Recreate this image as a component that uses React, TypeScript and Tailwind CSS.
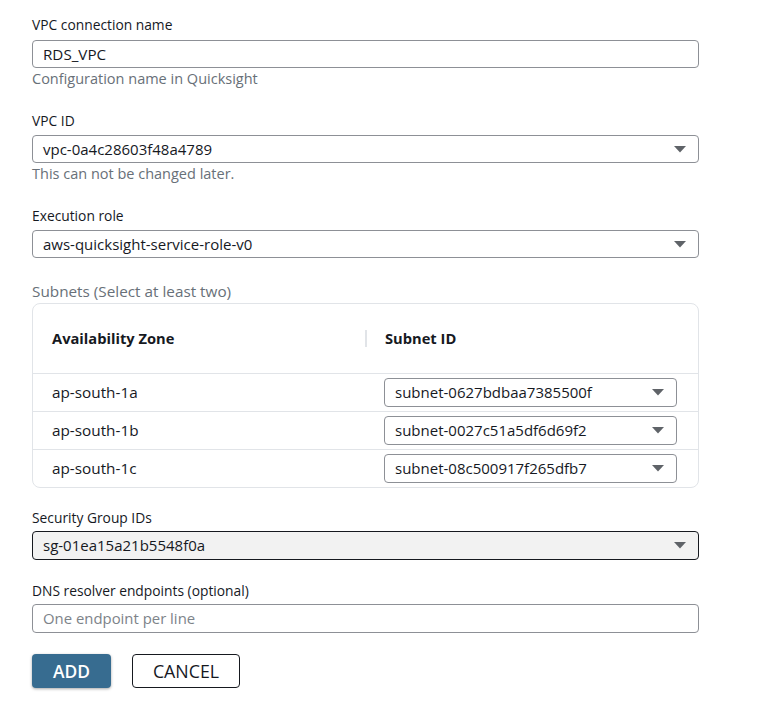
import React from "react";

const Caret = () => (
  <svg width="12" height="7" viewBox="0 0 12 7" className="shrink-0">
    <path d="M0 0 H12 L6 6.5 Z" fill="#5f6368" />
  </svg>
);

const Select = ({ value, className = "" }: { value: string; className?: string }) => (
  <div
    className={`flex items-center justify-between h-[28px] border border-[#8d9096] rounded-[4px] pl-[10px] pr-[12px] text-[15px] text-[#16191f] ${className}`}
  >
    <span>{value}</span>
    <Caret />
  </div>
);

const Label = ({ children, className = "" }: { children: React.ReactNode; className?: string }) => (
  <div className={`h-[18px] leading-[18px] text-[13.8px] text-[#16191f] ${className}`}>{children}</div>
);

const Help = ({ children }: { children: React.ReactNode }) => (
  <div className="h-[18px] leading-[18px] text-[14.5px] text-[#687078] mt-[2px]">{children}</div>
);

const rows = [
  { az: "ap-south-1a", id: "subnet-0627bdbaa7385500f", h: "h-[38px]" },
  { az: "ap-south-1b", id: "subnet-0027c51a5df6d69f2", h: "h-[38px]" },
  { az: "ap-south-1c", id: "subnet-08c500917f265dfb7", h: "h-[37px]" },
];

export default function App() {
  return (
    <div
      className="w-[776px] h-[717px] bg-white pl-[32px] pt-[16px]"
      style={{ fontFamily: '"Open Sans", "Noto Sans", sans-serif' }}
    >
      <div className="w-[667px] flex flex-col">
        <Label>VPC connection name</Label>
        <div className="mt-[6px] h-[28px] border border-[#8d9096] rounded-[4px] pl-[10px] flex items-center text-[15.2px] text-[#16191f]">
          RDS_VPC
        </div>
        <Help>Configuration name in Quicksight</Help>

        <Label className="mt-[24px]">VPC ID</Label>
        <Select value="vpc-0a4c28603f48a4789" className="mt-[5px]" />
        <Help>This can not be changed later.</Help>

        <Label className="mt-[24px]">Execution role</Label>
        <Select value="aws-quicksight-service-role-v0" className="mt-[5px]" />

        <div className="mt-[24px] h-[18px] leading-[18px] text-[15.3px] text-[#687078]">
          Subnets (Select at least two)
        </div>
        <div className="mt-[3px] border border-[#e1e4e8] rounded-[8px]">
          <div className="h-[70px] flex items-center border-b border-[#e1e4e8]">
            <div className="w-[332px] pl-[19px] text-[14.7px] font-bold text-[#16191f]">Availability Zone</div>
            <div className="w-[2px] h-[17px] bg-[#e1e4e8]" />
            <div className="pl-[18px] text-[14.7px] font-bold text-[#16191f]">Subnet ID</div>
          </div>
          {rows.map((r, i) => (
            <div
              key={r.az}
              className={`${r.h} flex items-center ${i < rows.length - 1 ? "border-b border-[#e1e4e8]" : ""}`}
            >
              <div className="w-[351px] pl-[19px] text-[15.3px] text-[#16191f]">{r.az}</div>
              <Select value={r.id} className="w-[293px] h-[29px]" />
            </div>
          ))}
        </div>

        <Label className="mt-[21px]">Security Group IDs</Label>
        <Select value="sg-01ea15a21b5548f0a" className="mt-[4px] h-[29px] bg-[#f2f2f2] border-[#16191f]" />

        <Label className="mt-[22px]">DNS resolver endpoints (optional)</Label>
        <div className="mt-[4px] h-[29px] border border-[#8d9096] rounded-[4px] pl-[10px] flex items-center text-[14.9px] text-[#7d8389]">
          One endpoint per line
        </div>

        <div className="mt-[21px] flex gap-[21px]">
          <button className="w-[79px] h-[34px] rounded-[4px] bg-[#376c90] text-white text-[17.4px] font-semibold shadow-[0_1px_3px_rgba(0,0,0,0.35)]">
            ADD
          </button>
          <button className="w-[108px] h-[34px] rounded-[4px] bg-white border border-[#16191f] text-[#16191f] text-[17.8px]">
            CANCEL
          </button>
        </div>
      </div>
    </div>
  );
}
